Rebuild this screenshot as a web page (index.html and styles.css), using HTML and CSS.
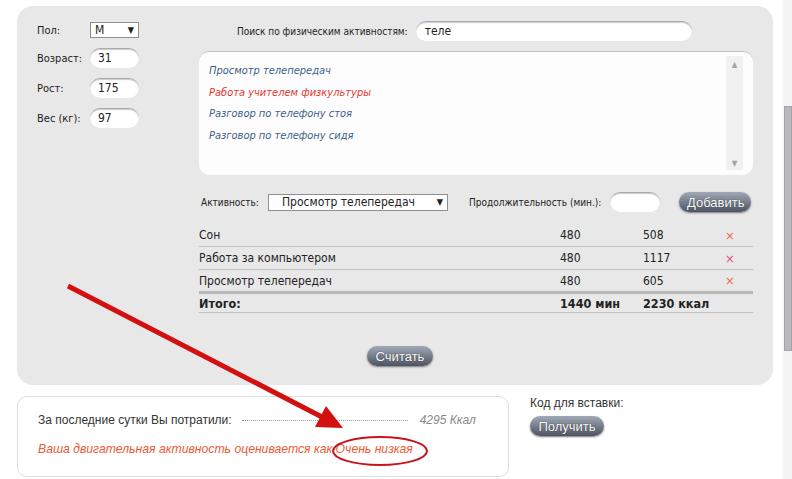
FILE: index.html
```html
<!DOCTYPE html>
<html lang="ru">
  <head>
    <meta charset="UTF-8" />
    <title>Калькулятор калорий</title>
    <link rel="stylesheet" href="styles.css">
  </head>
  <body>
    <div class="main">
      <div class="panel">
        <div class="person">
          <div class="field first">
            <span class="label">Пол:</span>
            <div class="select small-select">М<span class="arrow">▼</span></div>
          </div>
          <div class="field">
            <span class="label">Возраст:</span>
            <div class="pill">31</div>
          </div>
          <div class="field">
            <span class="label">Рост:</span>
            <div class="pill">175</div>
          </div>
          <div class="field">
            <span class="label">Вес (кг):</span>
            <div class="pill">97</div>
          </div>
        </div>

        <div class="activities">
          <div class="search">
            <span class="tiny">Поиск по физическим активностям:</span>
            <div class="pill search-input">теле</div>
          </div>

          <div class="listbox">
            <ul class="options">
              <li>Просмотр телепередач</li>
              <li class="hot">Работа учителем физкультуры</li>
              <li>Разговор по телефону стоя</li>
              <li>Разговор по телефону сидя</li>
            </ul>
            <div class="vscroll">
              <span>▲</span>
              <span>▼</span>
            </div>
          </div>

          <div class="add-row">
            <span class="tiny act-label">Активность:</span>
            <div class="select wide-select">Просмотр телепередач<span class="arrow">▼</span></div>
            <span class="tiny duration">Продолжительность (мин.):</span>
            <div class="pill minutes"></div>
            <button class="btn add">Добавить</button>
          </div>

          <div class="table">
            <div class="row">
              <span class="name">Сон</span>
              <span class="min">480</span>
              <span class="kcal">508</span>
              <span class="del">×</span>
            </div>
            <div class="row">
              <span class="name">Работа за компьютером</span>
              <span class="min">480</span>
              <span class="kcal">1117</span>
              <span class="del pink">×</span>
            </div>
            <div class="row last">
              <span class="name">Просмотр телепередач</span>
              <span class="min">480</span>
              <span class="kcal">605</span>
              <span class="del">×</span>
            </div>
            <div class="row total">
              <span class="name">Итого:</span>
              <span class="min">1440 мин</span>
              <span class="kcal">2230 ккал</span>
              <span class="del"></span>
            </div>
          </div>

          <button class="btn count">Считать</button>
        </div>
      </div>

      <div class="bottom">
        <div class="result">
          <div class="spent">
            <span>За последние сутки Вы потратили:</span>
            <span class="dots"></span>
            <span class="sum">4295 Ккал</span>
          </div>
          <div class="rating">Ваша двигательная активность оценивается как Очень низкая</div>
        </div>
        <div class="embed">
          <div>Код для вставки:</div>
          <button class="btn get">Получить</button>
        </div>
      </div>

      <svg class="marks" width="783" height="479" viewBox="0 0 783 479">
        <line x1="68" y1="286" x2="322" y2="417" stroke="#d40f0f" stroke-width="5" />
        <polygon points="343,428 315,427 326,406" fill="#d40f0f" />
        <ellipse cx="380" cy="451" rx="47" ry="14" fill="none" stroke="#c8141a" stroke-width="2" />
      </svg>
    </div>
    <div class="scrollbar"><div class="thumb"></div></div>
  </body>
</html>
```

FILE: styles.css
```css
:root {
  --panel: #e8e8e8;
  --tahoma: "DejaVu Sans Condensed", "DejaVu Sans", sans-serif;
  --arial: "Liberation Sans", Arial, sans-serif;
}

body {
  margin: 0;
  display: flex;
  height: 479px;
  overflow: hidden;
  background: #fff;
  color: #222;
  font-family: var(--tahoma);
}

.main {
  position: relative;
  width: 783px;
  padding: 6px 0 0 17px;
  box-sizing: border-box;
}

.scrollbar {
  width: 9px;
  background: #f3f3f3;
  padding-top: 106px;
}

.thumb {
  margin-left: 1px;
  height: 243px;
  background: #b9b9bd;
  border: 1px solid #a4a4a8;
}

/* big grey block */
.panel {
  display: flex;
  width: 756px;
  height: 379px;
  background: var(--panel);
  border-radius: 16px;
}

.person {
  width: 162px;
  flex-shrink: 0;
  padding: 16px 0 0 20px;
  display: flex;
  flex-direction: column;
  gap: 10px;
}

.field {
  display: flex;
  align-items: center;
  height: 20px;
  font-size: 11px;
}

.field.first {
  height: 16px;
}

.label {
  width: 53px;
}

.pill {
  width: 49px;
  height: 20px;
  box-sizing: border-box;
  padding: 2px 0 0 8px;
  background: #fff;
  border-radius: 10px;
  border-top: 1px solid #a9a9a9;
  box-shadow: inset 0 1px 1px #ccc;
  font-size: 12px;
}

.select {
  position: relative;
  box-sizing: border-box;
  background: #fff;
  border: 1px solid #8f8f8f;
  font-size: 12px;
}

.arrow {
  position: absolute;
  right: 4px;
  top: 0;
  font-size: 9px;
}

.small-select {
  width: 49px;
  height: 16px;
  padding: 0 0 0 4px;
  line-height: 14px;
}

.activities {
  width: 554px;
  padding-top: 15px;
}

.tiny {
  font-size: 10px;
  white-space: nowrap;
}

.search {
  display: flex;
  align-items: center;
  padding-left: 38px;
  gap: 8px;
}

.search-input {
  width: 276px;
  padding-left: 9px;
}

.listbox {
  display: flex;
  height: 124px;
  margin-top: 10px;
  box-sizing: border-box;
  background: #fdfdfd;
  border-radius: 10px;
  border-top: 1px solid #c4c4c4;
  padding: 4px 10px 5px 10px;
}

.options {
  flex: 1;
  list-style: none;
  margin: 0;
  padding: 4px 0 0 0;
  font-size: 11px;
  font-style: italic;
  color: #3c5d8c;
}

.options li {
  line-height: 21.7px;
}

.options .hot {
  color: #e8352e;
}

.vscroll {
  width: 17px;
  display: flex;
  flex-direction: column;
  justify-content: space-between;
  align-items: center;
  background: #f1f1f1;
  color: #a6a6a6;
  font-size: 8px;
  padding: 4px 0 2px;
}

.add-row {
  display: flex;
  align-items: center;
  margin-top: 17px;
  height: 20px;
  padding-left: 2px;
}

.act-label {
  width: 67px;
  flex-shrink: 0;
}

.wide-select {
  width: 180px;
  height: 17px;
  flex-shrink: 0;
  padding-left: 13px;
  line-height: 15px;
}

.duration {
  width: 141px;
  flex-shrink: 0;
  margin-left: 21px;
}

.minutes {
  flex-shrink: 0;
  width: 50px;
}

.btn {
  border: none;
  height: 20px;
  padding: 0 8px;
  border-radius: 10px;
  background: linear-gradient(#a1a9b6, #4c5464);
  box-shadow: 0 1px 2px #777;
  color: #fff;
  font-family: var(--arial);
  font-size: 13px;
  text-shadow: 0 0 1px #222;
}

.add {
  width: 72px;
  flex-shrink: 0;
  margin-left: 19px;
}

.table {
  margin-top: 12px;
  font-size: 12px;
}

.row {
  display: flex;
  align-items: center;
  height: 22px;
  border-bottom: 1px solid #c3c3c3;
}

.row.last {
  height: 21px;
  border-bottom: 3px solid #b9b9b9;
}

.row.total {
  height: 18px;
  font-weight: bold;
  font-size: 12.5px;
}

.name {
  width: 361px;
}

.min {
  width: 83px;
}

.kcal {
  width: 82px;
}

.del {
  color: #f26b4a;
  font-size: 13px;
}

.del.pink {
  color: #e8507a;
}

.count {
  margin: 33px 0 0 168px;
  width: 66px;
}

.bottom {
  display: flex;
  margin-top: 11px;
  font-family: var(--arial);
}

.result {
  width: 492px;
  height: 81px;
  box-sizing: border-box;
  border: 1px solid #dedede;
  border-radius: 10px;
  padding: 16px 0 0 20px;
}

.spent {
  display: flex;
  align-items: center;
  font-size: 12px;
  color: #333;
}

.dots {
  width: 166px;
  margin: 0 12px 0 10px;
  border-top: 1px dotted #9c9c9c;
}

.sum {
  font-style: italic;
  color: #888;
}

.rating {
  margin-top: 15px;
  font-size: 12.2px;
  font-style: italic;
  color: #ec5a34;
}

.embed {
  margin-left: 21px;
  font-size: 12px;
  color: #333;
}

.get {
  margin-top: 6px;
  width: 74px;
}

.marks {
  position: absolute;
  left: 0;
  top: 0;
  pointer-events: none;
}
```
